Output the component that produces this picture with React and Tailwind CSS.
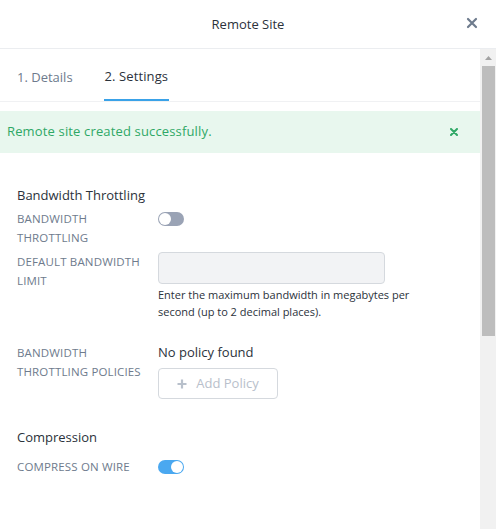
import React from 'react';

// ─── Small pieces ─────────────────────────────────────────────────────────────
const Toggle = ({ on }) => (
  <div
    className={
      on
        ? 'w-[26px] h-[14px] rounded-full bg-[#4aa8f0] flex items-center justify-end px-[1px]'
        : 'w-[26px] h-[14px] rounded-full bg-[#9aa3b5] flex items-center justify-start px-[1px]'
    }
  >
    <div className="w-[12px] h-[12px] rounded-full bg-white" />
  </div>
);

const Label = ({ children }) => (
  <div className="w-[141px] shrink-0 text-[11.5px] tracking-[0.15px] leading-[19px] uppercase text-[#6e7b8d] pr-1">
    {children}
  </div>
);

export default function App() {
  return (
    <div
      className="w-[496px] h-[529px] bg-white overflow-hidden flex flex-col text-[#22272e]"
      style={{ fontFamily: '"Open Sans", sans-serif' }}
    >
      {/* Header */}
      <div className="h-[49px] shrink-0 border-b border-[#ebedf0] flex items-center justify-center relative">
        <span className="text-[13px] text-[#2b323b] pt-[1px]">Remote Site</span>
        <button className="absolute right-[18px] top-[17px] text-[#6e7b8d]">
          <svg width="12" height="12" viewBox="0 0 12 12">
            <path d="M2 2 L10 10 M10 2 L2 10" stroke="currentColor" strokeWidth="2.2" strokeLinecap="round" />
          </svg>
        </button>
      </div>

      <div className="flex flex-1 min-h-0">
        {/* Content */}
        <div className="flex-1 min-w-0">
          {/* Tabs */}
          <div className="h-[53px] border-b border-[#f0f1f3] flex items-end pl-[17px] gap-[31px]">
            <div className="h-full flex items-center pt-[6px] text-[13px] text-[#6e7b8d]">1. Details</div>
            <div className="h-full flex flex-col">
              <div className="flex-1 flex items-center pt-[6px] px-[1px] text-[13px] tracking-[0.1px] text-[#2b323b]">
                2. Settings
              </div>
              <div className="h-[2px] bg-[#3aa2e8]" />
            </div>
          </div>

          {/* Alert */}
          <div className="mt-[9px] h-[42px] bg-[#e8f7ee] flex items-center justify-between pl-[7px] pr-[22px]">
            <span className="text-[13px] tracking-[0.15px] text-[#2fa866]">Remote site created successfully.</span>
            <svg width="8" height="8" viewBox="0 0 8 8">
              <path d="M1 1 L7 7 M7 1 L1 7" stroke="#2fa866" strokeWidth="2" strokeLinecap="round" />
            </svg>
          </div>

          {/* Bandwidth Throttling */}
          <div className="pl-[17px] pt-[33px]">
            <div className="text-[13px] text-[#2b323b] leading-[18px]">Bandwidth Throttling</div>

            <div className="flex mt-[5px]">
              <Label>
                Bandwidth
                <br />
                Throttling
              </Label>
              <div className="pt-[3px]">
                <Toggle on={false} />
              </div>
            </div>

            <div className="flex mt-[5px]">
              <Label>
                Default Bandwidth
                <br />
                Limit
              </Label>
              <div>
                <div className="w-[227px] h-[32px] rounded-[4px] border border-[#d5d9de] bg-[#f2f3f5]" />
                <div className="mt-[2px] w-[270px] text-[11px] leading-[17px] text-[#2b323b]">
                  Enter the maximum bandwidth in megabytes per second (up to 2 decimal places).
                </div>
              </div>
            </div>

            <div className="flex mt-[23px]">
              <Label>
                Bandwidth
                <br />
                Throttling Policies
              </Label>
              <div>
                <div className="text-[13px] leading-[18px] text-[#2b323b]">No policy found</div>
                <button className="mt-[7px] w-[120px] h-[31px] rounded-[4px] border border-[#d5d9de] bg-white flex items-center justify-center gap-[9px] text-[13px] text-[#b8c0cb]">
                  <svg width="10" height="10" viewBox="0 0 10 10">
                    <path d="M5 0.5 V9.5 M0.5 5 H9.5" stroke="#b8c0cb" strokeWidth="2.2" />
                  </svg>
                  Add Policy
                </button>
              </div>
            </div>

            {/* Compression */}
            <div className="mt-[29px] text-[13px] text-[#2b323b] leading-[18px]">Compression</div>
            <div className="flex items-center mt-[11px]">
              <Label>Compress on wire</Label>
              <Toggle on={true} />
            </div>
          </div>
        </div>

        {/* Scrollbar */}
        <div className="w-[16px] shrink-0 bg-[#f1f1f1] flex flex-col items-center">
          <div className="h-[17px] flex items-center justify-center">
            <svg width="7" height="4" viewBox="0 0 7 4">
              <path d="M0 4 L3.5 0 L7 4 Z" fill="#a3a3a3" />
            </svg>
          </div>
          <div className="w-[13px] h-[270px] bg-[#bdbdbd]" />
        </div>
      </div>
    </div>
  );
}
